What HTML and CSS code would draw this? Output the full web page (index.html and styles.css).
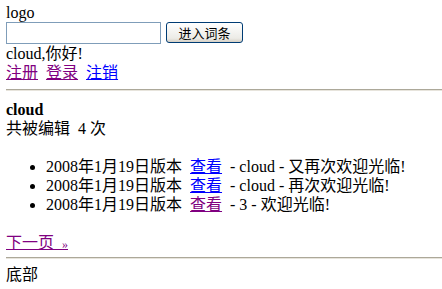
FILE: index.html
```html
<!DOCTYPE html>
<html>
<head>
<meta charset="utf-8">
<link rel="stylesheet" href="styles.css">
</head>
<body>
<div class="header">
  <div class="logo">logo</div>
  <form class="search">
    <input class="search-input" type="text">
    <button class="search-btn" type="button">进入词条</button>
  </form>
  <div class="greet">cloud,你好!</div>
  <div class="userlinks">
    <a class="visited" href="#">注册</a>
    <a class="visited" href="#">登录</a>
    <a href="#">注销</a>
  </div>
</div>
<hr class="rule">
<div class="content">
  <div class="title">cloud</div>
  <div class="count">共被编辑 &nbsp;4 次</div>
  <ul class="versions">
    <li>2008年1月19日版本 &nbsp;<a href="#">查看</a> &nbsp;- cloud - 又再次欢迎光临!</li>
    <li>2008年1月19日版本 &nbsp;<a href="#">查看</a> &nbsp;- cloud - 再次欢迎光临!</li>
    <li>2008年1月19日版本 &nbsp;<a class="visited" href="#">查看</a> &nbsp;- 3 - 欢迎光临!</li>
  </ul>
  <div class="pager"><a class="visited" href="#">下一页 &nbsp;<span class="raquo">»</span></a></div>
</div>
<hr class="rule rule-bottom">
<div class="footer">底部</div>
</body>
</html>
```
FILE: styles.css
```css
html, body {
  margin: 0;
  padding: 0;
  background: #fff;
}
body {
  padding: 3px 0 0 6px;
  font-family: "Liberation Serif", "Noto Sans CJK SC", serif;
  font-size: 16px;
  line-height: 19px;
  color: #000;
}
a {
  color: #0000ff;
  text-decoration: underline;
}
a.visited {
  color: #800080;
}
.search {
  display: flex;
  align-items: center;
  gap: 5px;
  margin: 0;
  height: 22px;
}
.search-input {
  width: 155px;
  height: 22px;
  box-sizing: border-box;
  border: 1px solid #7f9db9;
  margin: 0;
  padding: 0;
}
.search-btn {
  width: 77px;
  height: 21px;
  box-sizing: border-box;
  border: 1px solid #003c74;
  border-radius: 3px;
  background: linear-gradient(#fff, #ecebe6 80%, #d6d0c5);
  font-family: "Noto Sans CJK SC", sans-serif;
  font-size: 13px;
  line-height: 18px;
  padding: 0;
  margin-top: -1px;
  color: #000;
}
.userlinks a {
  margin-right: 4px;
}
.rule {
  margin: 7px 0 9px 0;
  height: 0;
  border: 0;
  border-top: 1px solid #aca899;
  border-bottom: 1px solid #e7e4dc;
}
.rule-bottom {
  margin-top: 3px;
}
.title {
  font-weight: bold;
}
.versions {
  margin: 19px 0 19px 0;
  padding-left: 40px;
}
.raquo {
  font-size: 12px;
}
.footer {
  margin-top: -3px;
}
```
